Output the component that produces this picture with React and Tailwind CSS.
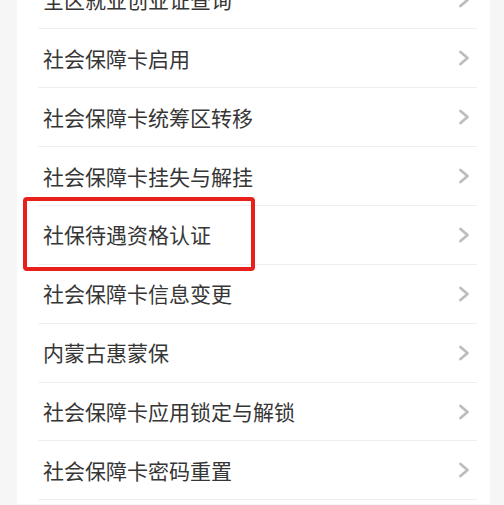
import React from "react";

const items = [
  "全区就业创业证查询",
  "社会保障卡启用",
  "社会保障卡统筹区转移",
  "社会保障卡挂失与解挂",
  "社保待遇资格认证",
  "社会保障卡信息变更",
  "内蒙古惠蒙保",
  "社会保障卡应用锁定与解锁",
  "社会保障卡密码重置",
];

function Chevron() {
  return (
    <svg width="12" height="16" viewBox="0 0 12 16" className="shrink-0">
      <polyline
        points="2.5,2 9.5,8 2.5,14"
        fill="none"
        stroke="#bdbdbd"
        strokeWidth="2.8"
        strokeLinecap="round"
        strokeLinejoin="round"
      />
    </svg>
  );
}

export default function App() {
  return (
    <div
      className="w-full h-[505px] overflow-hidden bg-[#f6f6f6] pl-[17px] pr-[14px]"
      style={{ fontFamily: '"Noto Sans CJK SC", "Noto Sans", sans-serif' }}
    >
      <div className="bg-white -mt-[29.4px] pl-[21px] pr-[13px] pb-[4px]">
        {items.map((t, i) => (
          <div
            key={i}
            className="relative h-[58.86px] flex items-center justify-between border-b border-[#efefef] pl-[5px] pr-[7px]"
          >
            <span className="text-[21px] leading-none text-[#363636] tracking-[0px]">{t}</span>
            <Chevron />
            {i === 4 && (
              <div className="absolute left-[-15.5px] top-[-8.7px] w-[232.5px] h-[73.5px] border-[4px] border-[#e8201c] rounded-[4px]" />
            )}
          </div>
        ))}
      </div>
    </div>
  );
}
